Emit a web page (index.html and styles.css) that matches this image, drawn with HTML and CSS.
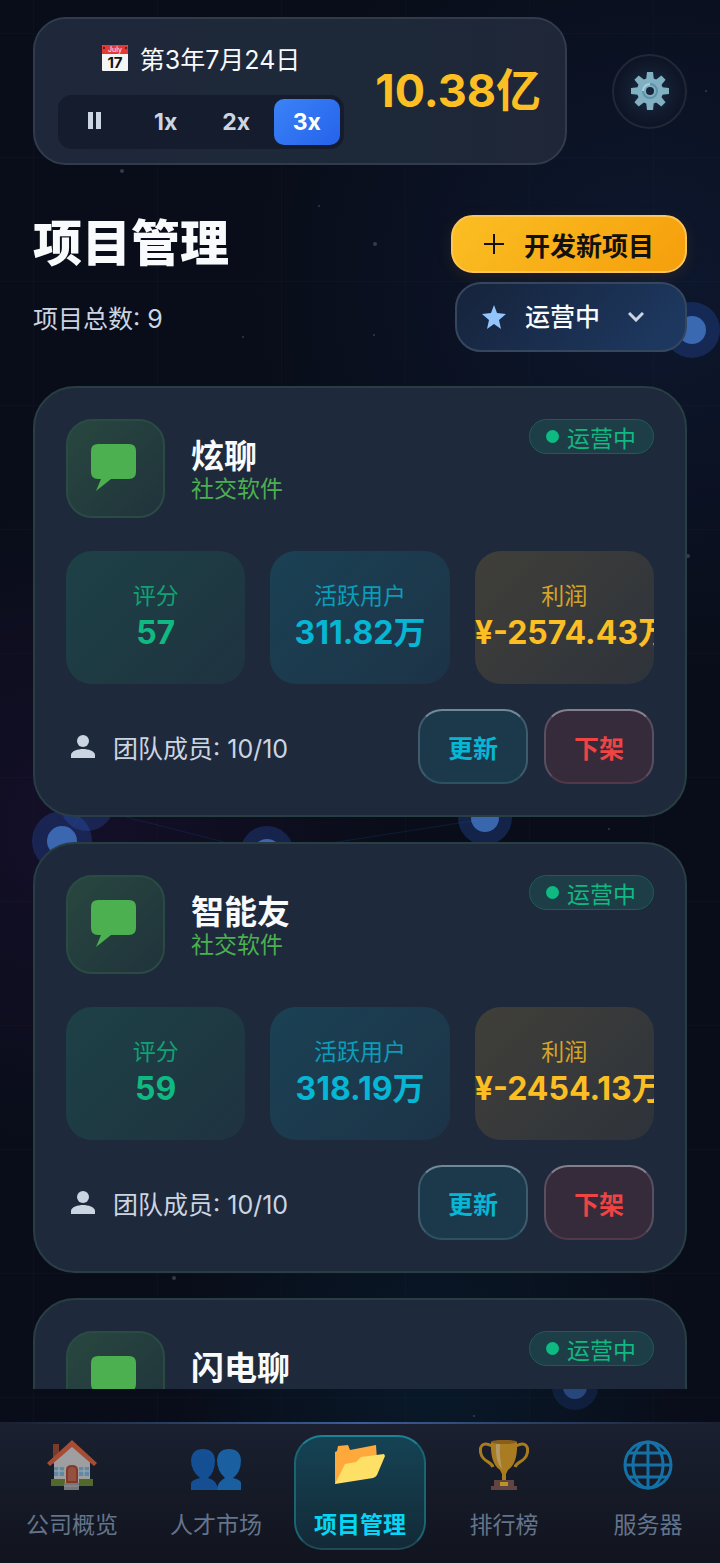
FILE: index.html
```html
<!DOCTYPE html>
<html lang="zh-CN">

<head>
    <meta charset="UTF-8" />
    <meta name="viewport" content="width=device-width, initial-scale=1.0" />
    <title>项目管理</title>
    <link rel="stylesheet" href="styles.css">
</head>

<body>
    <!-- Shared icons -->
    <svg class="sprite" aria-hidden="true">
        <symbol id="icon-chat" viewBox="0 0 48 48">
            <path fill="#4caf50" d="M7 0H38Q45 0 45 7V28Q45 35 38 35H20L5 47L10 35H7Q0 35 0 28V7Q0 0 7 0Z" />
        </symbol>
        <symbol id="icon-user" viewBox="0 0 24 24">
            <circle cx="12" cy="6" r="6" fill="#cbd5e1" />
            <path fill="#cbd5e1" d="M0 23V20C0 16 7 14 12 14S24 16 24 20V23Z" />
        </symbol>
    </svg>

    <!-- Background particles -->
    <svg class="particles" aria-hidden="true">
        <g stroke="#3b82f6" stroke-opacity="0.12">
            <path d="M62 841L87 807M87 807L267 853M267 853L485 819" />
        </g>
        <g fill="#2d5fc4" fill-opacity="0.28">
            <circle cx="692" cy="330" r="28" />
            <circle cx="62" cy="841" r="30" />
            <circle cx="87" cy="804" r="27" />
            <circle cx="267" cy="853" r="27" />
            <circle cx="485" cy="818" r="27" />
            <circle cx="575" cy="1387" r="23" fill-opacity="0.18" />
        </g>
        <g fill="#4478c8" fill-opacity="0.8">
            <circle cx="692" cy="330" r="14" />
            <circle cx="62" cy="841" r="15" />
            <circle cx="267" cy="853" r="14" />
            <circle cx="485" cy="818" r="14" />
            <circle cx="575" cy="1387" r="12" fill-opacity="0.45" />
        </g>
        <g fill="#94a3b8" fill-opacity="0.3">
            <circle cx="122" cy="171" r="2" />
            <circle cx="319" cy="206" r="1" />
            <circle cx="375" cy="244" r="2" />
            <circle cx="243" cy="337" r="1" />
            <circle cx="374" cy="335" r="1" />
            <circle cx="706" cy="91" r="1" />
            <circle cx="688" cy="556" r="2" />
            <circle cx="609" cy="829" r="1" />
            <circle cx="174" cy="1278" r="2" />
            <circle cx="474" cy="1416" r="1" />
        </g>
    </svg>

    <div class="app">
        <!-- Status bar -->
        <header class="topbar">
            <div class="status">
                <div class="clock">
                    <div class="date">
                        <svg class="date-icon" viewBox="0 0 26 26" aria-hidden="true">
                            <rect width="26" height="26" rx="1" fill="#f5f5f5" />
                            <path d="M0 1Q0 0 1 0H25Q26 0 26 1V9H0Z" fill="#e53935" />
                            <circle cx="2" cy="3" r="1" fill="#222" />
                            <circle cx="24" cy="3" r="1" fill="#222" />
                            <text x="13" y="7" class="cal-month">July</text>
                            <text x="13" y="23" class="cal-day">17</text>
                        </svg>
                        <span>第3年7月24日</span>
                    </div>
                    <div class="speed">
                        <button type="button" aria-label="暂停">
                            <svg width="14" height="18" viewBox="0 0 14 18"><path d="M0 0H5V17H0ZM8 0H13V17H8Z" fill="#cbd5e1" /></svg>
                        </button>
                        <button type="button">1x</button>
                        <button type="button">2x</button>
                        <button type="button" class="active">3x</button>
                    </div>
                </div>
                <div class="money">10.38亿</div>
            </div>
            <button type="button" class="settings" aria-label="设置">
                <svg width="38" height="38" viewBox="0 0 38 38">
                    <g fill="#80b0c2">
                        <path id="tooth" d="M16 0H22L23 9H15Z" />
                        <use href="#tooth" transform="rotate(45 19 19)" />
                        <use href="#tooth" transform="rotate(90 19 19)" />
                        <use href="#tooth" transform="rotate(135 19 19)" />
                        <use href="#tooth" transform="rotate(180 19 19)" />
                        <use href="#tooth" transform="rotate(225 19 19)" />
                        <use href="#tooth" transform="rotate(270 19 19)" />
                        <use href="#tooth" transform="rotate(315 19 19)" />
                        <circle cx="19" cy="19" r="13" />
                    </g>
                    <circle cx="19" cy="19" r="7" fill="#80b0c2" stroke="#5c93a8" stroke-width="2" />
                    <path d="M12 19A7 7 0 0 1 19 12" fill="none" stroke="#a8d2de" stroke-width="2" />
                    <circle cx="19" cy="19" r="4" fill="#17243a" />
                </svg>
            </button>
        </header>

        <main class="content">
            <div class="page-head">
                <h1>项目管理</h1>
                <button type="button" class="create">
                    <svg width="20" height="20" viewBox="0 0 20 20" aria-hidden="true"><path d="M10 0V20M0 10H20" stroke="#111" stroke-width="2" /></svg>
                    开发新项目
                </button>
                <p class="total">项目总数: 9</p>
                <div class="filter">
                    <svg class="filter-star" viewBox="0 0 24 24" aria-hidden="true"><path fill="#93c5fd" d="M12 0L15 8L24 9L17 15L19 24L12 19L5 24L7 15L0 9L9 8Z" /></svg>
                    <select aria-label="项目状态">
                        <option>运营中</option>
                        <option>开发中</option>
                        <option>已下架</option>
                    </select>
                    <svg class="filter-arrow" viewBox="0 0 16 10" aria-hidden="true"><path d="M1 1L8 8L15 1" fill="none" stroke="#cbd5e1" stroke-width="3" /></svg>
                </div>
            </div>

            <div class="project-list">
                <article class="project">
                    <div class="project-head">
                        <div class="project-icon"><svg><use href="#icon-chat" /></svg></div>
                        <div class="project-name">
                            <h2>炫聊</h2>
                            <p>社交软件</p>
                        </div>
                        <span class="badge">运营中</span>
                    </div>
                    <div class="metrics">
                        <div class="metric score"><span>评分</span><strong>57</strong></div>
                        <div class="metric users"><span>活跃用户</span><strong>311.82万</strong></div>
                        <div class="metric profit"><span>利润</span><strong>¥-2574.43万</strong></div>
                    </div>
                    <div class="project-foot">
                        <p class="team"><svg><use href="#icon-user" /></svg>团队成员: 10/10</p>
                        <button type="button" class="update">更新</button>
                        <button type="button" class="remove">下架</button>
                    </div>
                </article>

                <article class="project">
                    <div class="project-head">
                        <div class="project-icon"><svg><use href="#icon-chat" /></svg></div>
                        <div class="project-name">
                            <h2>智能友</h2>
                            <p>社交软件</p>
                        </div>
                        <span class="badge">运营中</span>
                    </div>
                    <div class="metrics">
                        <div class="metric score"><span>评分</span><strong>59</strong></div>
                        <div class="metric users"><span>活跃用户</span><strong>318.19万</strong></div>
                        <div class="metric profit"><span>利润</span><strong>¥-2454.13万</strong></div>
                    </div>
                    <div class="project-foot">
                        <p class="team"><svg><use href="#icon-user" /></svg>团队成员: 10/10</p>
                        <button type="button" class="update">更新</button>
                        <button type="button" class="remove">下架</button>
                    </div>
                </article>

                <article class="project">
                    <div class="project-head">
                        <div class="project-icon"><svg><use href="#icon-chat" /></svg></div>
                        <div class="project-name">
                            <h2>闪电聊</h2>
                        </div>
                        <span class="badge">运营中</span>
                    </div>
                </article>
            </div>
        </main>

        <!-- Bottom navigation -->
        <nav class="tabs">
            <a href="#company">
                <svg viewBox="0 0 50 50" aria-hidden="true">
                    <path d="M6 4H12V20L6 24Z" fill="#a5482a" />
                    <path d="M7 21L25 4L43 21V46H7Z" fill="#d8d5d3" />
                    <path d="M4 39H18V46H4ZM32 39H46V46H32Z" fill="#6c8a2e" />
                    <path d="M0 23L25 0L50 23L47 26L25 7L3 26Z" fill="#e2613a" />
                    <path d="M7 27H17V36H7ZM32 27H42V36H32Z" fill="#7fb8d8" />
                    <path d="M12 27V36M37 27V36M7 31H17M32 31H42" stroke="#e8e8e8" />
                    <path d="M19 43V30Q19 25 25 25T31 30V43Z" fill="#b2452a" />
                    <path d="M21 41V31Q21 27 25 27T29 31V41Z" fill="#c9684a" />
                    <path d="M17 43H32V50H17Z" fill="#9e9e9e" />
                    <path d="M17 46H32" stroke="#c4c4c4" />
                </svg>
                <span>公司概览</span>
            </a>
            <a href="#talent">
                <svg viewBox="0 0 50 50" aria-hidden="true">
                    <path d="M0 50V43Q1 40 9 38Q0 31 0 20Q1 9 12 9T24 20Q24 32 17 38Q26 40 27 50Z" fill="#1565c0" />
                    <path d="M26 50Q26 42 34 38Q26 31 26 20Q27 9 38 9T50 20Q50 32 42 38Q50 40 50 43V50Z" fill="#1c7dd2" />
                </svg>
                <span>人才市场</span>
            </a>
            <a href="#projects" class="current">
                <svg viewBox="0 0 50 50" aria-hidden="true">
                    <path d="M0 12L2 11L3 6L13 5L15 10L41 5L42 20L0 44Z" fill="#ffa83c" />
                    <path d="M0 44L10 24L21 22L26 17L49 14L50 16L42 35Q41 37 38 38Z" fill="#ffe066" />
                </svg>
                <span>项目管理</span>
            </a>
            <a href="#ranking">
                <svg viewBox="0 0 50 50" aria-hidden="true">
                    <path d="M13 6C3 1 0 7 2 14C4 22 12 21 14 27M37 6C47 1 50 7 48 14C46 22 38 21 36 27" fill="none" stroke="#e5a316" stroke-width="3" />
                    <path d="M12 2Q25 -2 38 2Q39 23 29 30L27 34V40H23V34L21 30Q11 23 12 2Z" fill="#e9a51d" />
                    <path d="M17 4Q16 22 23 29Q20 16 21 4Z" fill="#f5cf83" />
                    <ellipse cx="25" cy="2" rx="13" ry="2" fill="#b97813" />
                    <path d="M15 40H35V46H38V50H12V46H15Z" fill="#81574c" />
                    <path d="M21 42H29V46H21Z" fill="#ffc928" />
                </svg>
                <span>排行榜</span>
            </a>
            <a href="#server">
                <svg viewBox="0 0 50 50" aria-hidden="true">
                    <g fill="none" stroke="#1496dc" stroke-width="3">
                        <circle cx="25" cy="25" r="23" />
                        <ellipse cx="25" cy="25" rx="15" ry="23" />
                        <path d="M25 2V48M2 25H48M6 13H44M6 37H44" />
                    </g>
                </svg>
                <span>服务器</span>
            </a>
        </nav>
    </div>
</body>

</html>
```
FILE: styles.css
```css
* {
    box-sizing: border-box;
}

body {
    margin: 0;
    color: #f8fafc;
    font-family: Inter, "Noto Sans CJK SC", sans-serif;
    font-size: 25px;
    background:
        linear-gradient(90deg, rgba(59, 130, 246, 0.03) 1px, transparent 1px) 33px 0 / 124px 124px,
        linear-gradient(rgba(59, 130, 246, 0.03) 1px, transparent 1px) 0 33px / 124px 124px,
        radial-gradient(circle at 10% 53%, rgba(88, 28, 135, 0.14), transparent 320px),
        radial-gradient(circle at 90% 18%, rgba(30, 64, 130, 0.2), transparent 400px),
        radial-gradient(circle at 60% 88%, rgba(8, 60, 90, 0.25), transparent 260px),
        #090d19;
}

h1,
h2,
p {
    margin: 0;
}

button,
select {
    font-family: inherit;
    cursor: pointer;
}

.sprite {
    position: absolute;
    width: 0;
    height: 0;
}

.particles {
    position: absolute;
    inset: 0;
    width: 100%;
    height: 100%;
    pointer-events: none;
}

.app {
    position: relative;
    display: flex;
    flex-direction: column;
    height: 100vh;
}

/* Status bar */
.topbar {
    display: flex;
    align-items: center;
    gap: 45px;
    padding: 17px 33px 0;
}

.status {
    flex: 1;
    display: flex;
    align-items: center;
    justify-content: space-between;
    padding: 14px 24px 14px 23px;
    border: 2px solid #313b4b;
    border-radius: 33px;
    background: linear-gradient(90deg, #1f273a, #1d2939 60%, #1f2638);
}

.clock {
    width: 286px;
}

.date {
    display: flex;
    align-items: center;
    justify-content: center;
    gap: 12px;
    height: 50px;
    margin-bottom: 12px;
}

.date-icon {
    width: 26px;
    height: 26px;
}

.cal-month {
    fill: #fff;
    font-size: 7px;
    text-anchor: middle;
}

.cal-day {
    fill: #111;
    font-size: 15px;
    font-weight: 700;
    text-anchor: middle;
}

.speed {
    display: grid;
    grid-template-columns: repeat(4, 1fr);
    gap: 4px;
    padding: 4px;
    border-radius: 14px;
    background: #151c2d;
}

.speed button {
    height: 46px;
    padding: 0;
    border: none;
    border-radius: 10px;
    background: none;
    color: #cbd5e1;
    font-size: 23px;
    font-weight: 700;
}

.speed .active {
    background: linear-gradient(135deg, #3b82f6, #2563eb);
    color: #fff;
}

.money {
    color: #fbbf24;
    font-size: 45px;
    font-weight: 700;
    line-height: 58px;
}

.settings {
    display: grid;
    place-items: center;
    width: 75px;
    height: 75px;
    padding: 0;
    border: 2px solid #202838;
    border-radius: 50%;
    background: radial-gradient(circle, #1c2c43, #0e1526 65%);
}

/* Page heading */
.content {
    flex: 1;
    display: flex;
    flex-direction: column;
    min-height: 0;
    padding: 50px 33px 33px;
}

.page-head {
    display: grid;
    grid-template-columns: 1fr auto;
    align-items: center;
    gap: 9px;
    margin-bottom: 34px;
}

h1 {
    font-size: 49px;
    font-weight: 900;
    line-height: 58px;
}

.create {
    display: flex;
    align-items: center;
    justify-content: center;
    gap: 20px;
    width: 236px;
    height: 58px;
    padding: 0;
    border: 2px solid #fcc558;
    border-radius: 22px;
    background: linear-gradient(135deg, #fbbf24, #f59e0b) border-box;
    color: #111;
    font-size: 26px;
    font-weight: 700;
    box-shadow: 0 4px 16px rgba(245, 158, 11, 0.1);
}

.total {
    color: #cbd5e1;
}

.filter {
    position: relative;
    justify-self: end;
    width: 232px;
}

.filter select {
    display: block;
    width: 100%;
    height: 70px;
    padding: 0 60px 0 68px;
    border: 2px solid #35475f;
    border-radius: 26px;
    appearance: none;
    background: linear-gradient(135deg, #16233b, #1e3a63);
    color: #f8fafc;
    font-size: 25px;
    font-weight: 500;
}

.filter-star,
.filter-arrow {
    position: absolute;
    top: 50%;
    transform: translateY(-50%);
    pointer-events: none;
}

.filter-star {
    left: 27px;
    width: 24px;
    height: 24px;
}

.filter-arrow {
    right: 43px;
    width: 16px;
    height: 10px;
}

/* Project cards */
.project-list {
    flex: 1;
    display: flex;
    flex-direction: column;
    gap: 25px;
    min-height: 0;
    overflow-y: auto;
    scrollbar-width: none;
}

.project {
    flex: none;
    padding: 31px;
    border: 2px solid #283e43;
    border-radius: 42px;
    background: #1e293b;
}

.project-head {
    display: flex;
    align-items: flex-start;
    gap: 26px;
    margin-bottom: 33px;
}

.project-icon {
    display: flex;
    width: 99px;
    height: 99px;
    padding: 23px;
    border: 2px solid #2a4b43;
    border-radius: 26px;
    background: linear-gradient(135deg, #28473f, #20333c);
}

.project-icon svg {
    width: 48px;
    height: 48px;
}

.project-name {
    flex: 1;
    padding-top: 20px;
}

h2 {
    font-size: 33px;
    font-weight: 700;
    line-height: 34px;
}

.project-name p {
    color: #4caf50;
    font-size: 23px;
    line-height: 32px;
}

.badge {
    display: flex;
    align-items: center;
    gap: 8px;
    height: 35px;
    padding: 0 17px 0 16px;
    border: 1px solid #1d5d56;
    border-radius: 18px;
    background: #1d3e47;
    color: #10b981;
    font-size: 23px;
}

.badge::before {
    content: "";
    width: 13px;
    height: 13px;
    border-radius: 50%;
    background: #10b981;
}

.metrics {
    display: grid;
    grid-template-columns: repeat(3, minmax(0, 1fr));
    gap: 25px;
    margin-bottom: 25px;
}

.metric {
    height: 133px;
    padding-top: 28px;
    border-radius: 26px;
    overflow: hidden;
    text-align: center;
    white-space: nowrap;
}

.metric span,
.metric strong {
    display: block;
}

.metric span {
    font-size: 23px;
    line-height: 34px;
    opacity: 0.8;
}

.metric strong {
    font-size: 32px;
    font-weight: 700;
    line-height: 40px;
}

.score {
    background: linear-gradient(135deg, #1d4146, #1f3340);
    color: #10b981;
}

.users {
    background: linear-gradient(135deg, #1b4154, #1d3347);
    color: #06b6d4;
}

.profit {
    background: linear-gradient(135deg, #403f39, #2e333b);
    color: #fbbf24;
}

.project-foot {
    display: flex;
    align-items: center;
    gap: 16px;
}

.team {
    flex: 1;
    display: flex;
    align-items: center;
    gap: 18px;
    padding-left: 5px;
    color: #cbd5e1;
}

.team svg {
    width: 24px;
    height: 24px;
}

.project-foot button {
    width: 110px;
    height: 75px;
    padding: 0;
    border: 2px solid;
    border-radius: 24px;
    font-size: 25px;
    font-weight: 700;
}

.project-foot .update {
    border-color: #70899a #3f5c6d #2b5262;
    background: #1c394b;
    color: #06b6d4;
}

.project-foot .remove {
    border-color: #857f8c #5a4f60 #523848;
    background: #352b3b;
    color: #ef4444;
}

/* Bottom navigation */
.tabs {
    position: relative;
    display: grid;
    grid-template-columns: repeat(5, 1fr);
    padding: 13px 0;
    background: linear-gradient(#1a2030, #11141e);
}

.tabs::before {
    content: "";
    position: absolute;
    top: 0;
    left: 0;
    right: 0;
    height: 2px;
    background: linear-gradient(90deg, transparent, #3b5e98, transparent);
}

.tabs a {
    display: flex;
    flex-direction: column;
    align-items: center;
    gap: 15px;
    height: 115px;
    margin: 0 6px;
    padding-top: 3px;
    border: 2px solid transparent;
    border-radius: 28px;
    color: #64748b;
    font-size: 23px;
    line-height: 40px;
    text-decoration: none;
}

.tabs svg {
    width: 50px;
    height: 50px;
    opacity: 0.7;
}

.tabs .current {
    border-color: #1b8395 #196574 #204b54;
    background: linear-gradient(#154354, #132a37);
    color: #06d6f5;
    font-weight: 700;
}

.tabs .current svg {
    opacity: 1;
}
```
